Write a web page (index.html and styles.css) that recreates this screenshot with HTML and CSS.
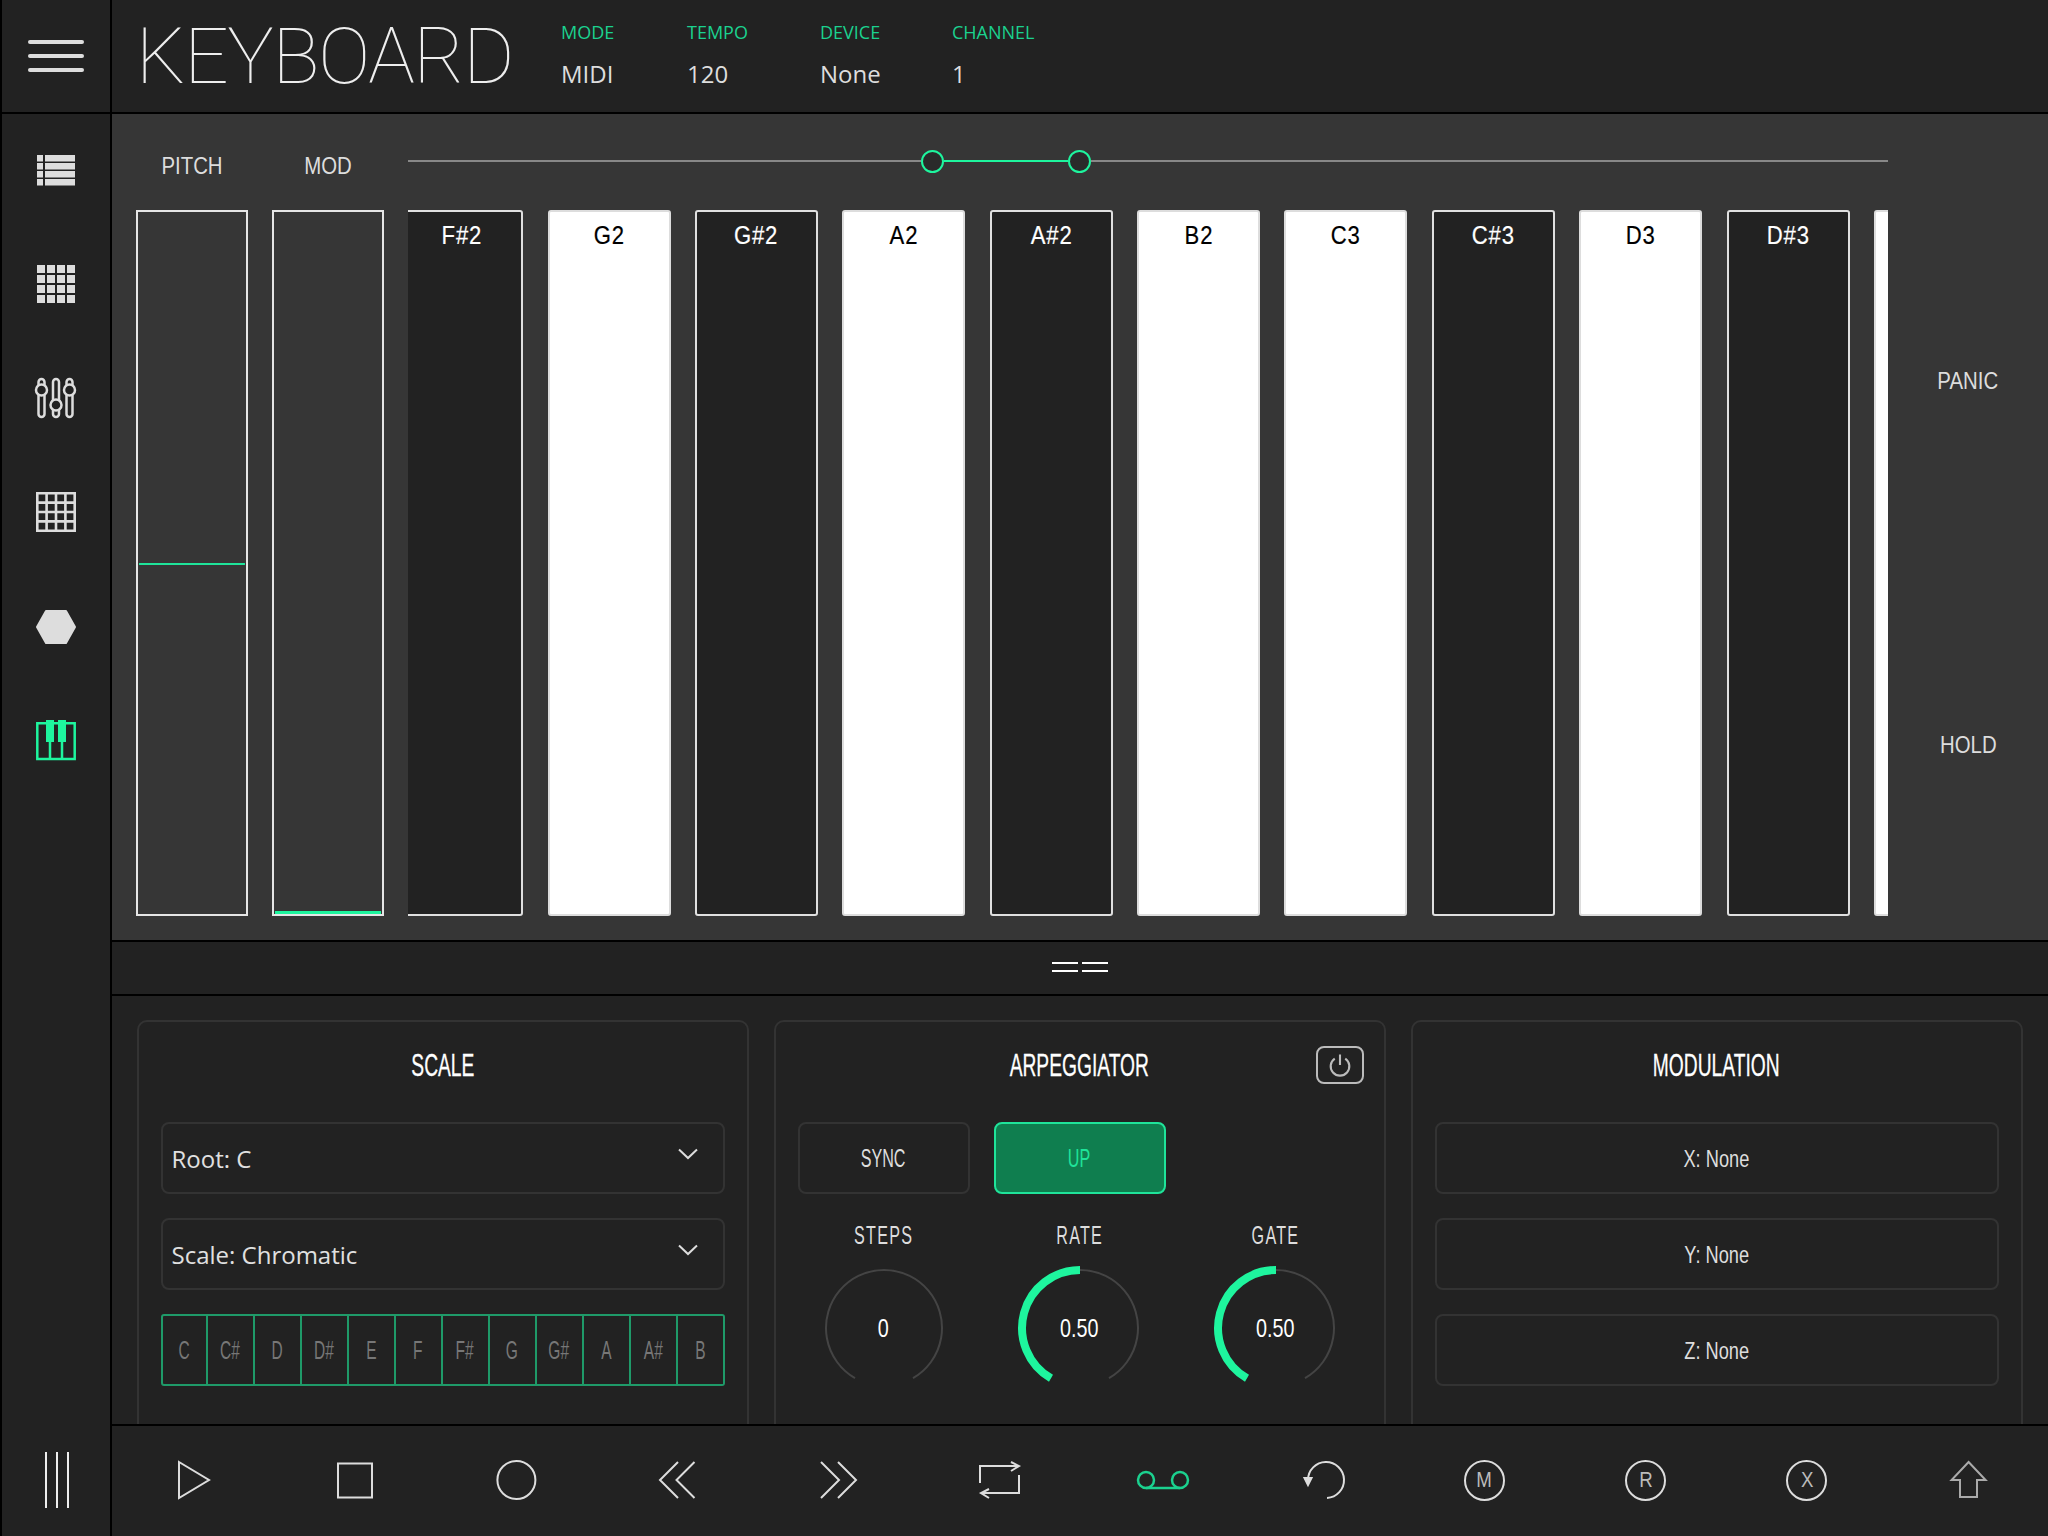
FILE: index.html
```html
<!DOCTYPE html>
<html lang="en">

<head>
  <meta charset="UTF-8">
  <title>Keyboard</title>
  <link rel="stylesheet" href="styles.css">
</head>

<body>
  <div id="app">
    <!-- left column -->
    <div class="sidebar">
      <div class="brand">
        <div class="burger"><span></span><span></span><span></span></div>
      </div>
      <div class="nav">
        <div class="nav-item">
          <svg width="48" height="48" viewBox="0 0 48 48" fill="#ddd">
            <path d="M5 9h6v6.5h-6zM13 9h30v6.5h-30zM5 17h6v6.5h-6zM13 17h30v6.5h-30zM5 25h6v6.5h-6zM13 25h30v6.5h-30zM5 33h6v6.5h-6zM13 33h30v6.5h-30z"/>
          </svg>
        </div>
        <div class="nav-item">
          <svg width="48" height="48" viewBox="0 0 48 48" fill="#ddd">
            <path d="M5 5h8v8h-8zM15 5h8v8h-8zM25 5h8v8h-8zM35 5h8v8h-8zM5 15h8v8h-8zM15 15h8v8h-8zM25 15h8v8h-8zM35 15h8v8h-8zM5 25h8v8h-8zM15 25h8v8h-8zM25 25h8v8h-8zM35 25h8v8h-8zM5 35h8v8h-8zM15 35h8v8h-8zM25 35h8v8h-8zM35 35h8v8h-8z"/>
          </svg>
        </div>
        <div class="nav-item">
          <svg width="48" height="48" viewBox="0 0 48 48" fill="#222" stroke="#ddd" stroke-width="2.5">
            <rect x="6.5" y="5" width="6" height="38" rx="3"/>
            <rect x="21" y="5" width="6" height="38" rx="3"/>
            <rect x="34.5" y="5" width="6" height="38" rx="3"/>
            <circle cx="9.5" cy="16" r="5.5"/>
            <circle cx="24" cy="31" r="5.5"/>
            <circle cx="37.5" cy="16" r="5.5"/>
          </svg>
        </div>
        <div class="nav-item">
          <svg width="48" height="48" viewBox="0 0 48 48" fill="none" stroke="#ddd" stroke-width="2.6">
            <path d="M5.3 5.3H42.7V42.7H5.3ZM14.6 5.3V42.7M24 5.3V42.7M33.4 5.3V42.7M5.3 14.6H42.7M5.3 24H42.7M5.3 33.4H42.7"/>
          </svg>
        </div>
        <div class="nav-item">
          <svg width="48" height="48" viewBox="0 0 48 48" fill="#ddd" stroke="#ddd" stroke-width="2" stroke-linejoin="round">
            <polygon points="5,25 14,9 34,9 43,25 34,41 14,41"/>
          </svg>
        </div>
        <div class="nav-item">
          <svg width="48" height="48" viewBox="0 0 48 48" fill="none" stroke="#1ef59e" stroke-width="2.5">
            <path d="M5.3 7.3H42.7V43H5.3ZM18 7.3V43M30 7.3V43"/>
            <path d="M14 4h8v22h-8zM26 4h8v22h-8z" fill="#1ef59e" stroke="none"/>
          </svg>
        </div>
        <div class="nav-foot">
          <svg width="26" height="58" viewBox="0 0 26 58" stroke="#eee" stroke-width="2">
            <path d="M2 1V57M13 1V57M24 1V57"/>
          </svg>
        </div>
      </div>
    </div>

    <div class="main">
      <div class="header">
        <h1 class="title">KEYBOARD</h1>
        <div class="info w-mode"><span class="info-label">MODE</span><span class="info-value">MIDI</span></div>
        <div class="info w-tempo"><span class="info-label">TEMPO</span><span class="info-value">120</span></div>
        <div class="info w-device"><span class="info-label">DEVICE</span><span class="info-value">None</span></div>
        <div class="info"><span class="info-label">CHANNEL</span><span class="info-value">1</span></div>
      </div>

      <div class="play-area">
        <div class="fader-col">
          <div class="fader-label"><span class="narrow">PITCH</span></div>
          <div class="fader"><div class="fader-pitch"></div></div>
        </div>
        <div class="fader-col">
          <div class="fader-label"><span class="narrow">MOD</span></div>
          <div class="fader"><div class="fader-mod"></div></div>
        </div>
        <div class="keys-col">
          <div class="range">
            <div class="range-line"></div>
            <div class="range-handle"></div>
            <div class="range-line range-on"></div>
            <div class="range-handle"></div>
            <div class="range-line range-end"></div>
          </div>
          <div class="keys">
            <div class="key black"><span class="narrow">F#2</span></div>
            <div class="key white"><span class="narrow">G2</span></div>
            <div class="key black"><span class="narrow">G#2</span></div>
            <div class="key white"><span class="narrow">A2</span></div>
            <div class="key black"><span class="narrow">A#2</span></div>
            <div class="key white"><span class="narrow">B2</span></div>
            <div class="key white"><span class="narrow">C3</span></div>
            <div class="key black"><span class="narrow">C#3</span></div>
            <div class="key white"><span class="narrow">D3</span></div>
            <div class="key black"><span class="narrow">D#3</span></div>
            <div class="key white"></div>
          </div>
        </div>
        <div class="side-btns">
          <div class="side-btn"><span class="narrow">PANIC</span></div>
          <div class="side-btn"><span class="narrow">HOLD</span></div>
        </div>
      </div>

      <div class="divider">
        <div class="grip"><span></span><span></span></div>
        <div class="grip"><span></span><span></span></div>
      </div>

      <div class="panels">
        <div class="panel">
          <div class="panel-head"><h2 class="panel-title"><span class="cond">SCALE</span></h2></div>
          <div class="stack">
            <div class="select">
              <span>Root: C</span>
              <svg width="20" height="12" viewBox="0 0 20 12" fill="none" stroke="#ddd" stroke-width="2"><path d="M1 1.5L10 10L19 1.5"/></svg>
            </div>
            <div class="select">
              <span>Scale: Chromatic</span>
              <svg width="20" height="12" viewBox="0 0 20 12" fill="none" stroke="#ddd" stroke-width="2"><path d="M1 1.5L10 10L19 1.5"/></svg>
            </div>
            <div class="notes">
              <div class="note"><span class="cond">C</span></div>
              <div class="note"><span class="cond">C#</span></div>
              <div class="note"><span class="cond">D</span></div>
              <div class="note"><span class="cond">D#</span></div>
              <div class="note"><span class="cond">E</span></div>
              <div class="note"><span class="cond">F</span></div>
              <div class="note"><span class="cond">F#</span></div>
              <div class="note"><span class="cond">G</span></div>
              <div class="note"><span class="cond">G#</span></div>
              <div class="note"><span class="cond">A</span></div>
              <div class="note"><span class="cond">A#</span></div>
              <div class="note"><span class="cond">B</span></div>
            </div>
          </div>
        </div>

        <div class="panel">
          <div class="panel-head">
            <h2 class="panel-title"><span class="cond">ARPEGGIATOR</span></h2>
            <div class="power">
              <svg width="28" height="28" viewBox="0 0 24 24" fill="none" stroke="#bbb" stroke-width="1.8">
                <path d="M7.5 6.5A8 8 0 1 0 16.5 6.5M12 3V12"/>
              </svg>
            </div>
          </div>
          <div class="arp-grid">
            <div class="btn"><span class="cond">SYNC</span></div>
            <div class="btn btn-on"><span class="cond">UP</span></div>
          </div>
          <div class="arp-grid knobs">
            <div class="knob-col">
              <div class="knob-label"><span class="cond">STEPS</span></div>
              <div class="knob">
                <svg width="130" height="130" viewBox="0 0 130 130" fill="none">
                  <path d="M36 115.2A58 58 0 1 1 94 115.2" stroke="#444" stroke-width="2"/>
                </svg>
                <div class="knob-value"><span class="cond-soft">0</span></div>
              </div>
            </div>
            <div class="knob-col">
              <div class="knob-label"><span class="cond">RATE</span></div>
              <div class="knob">
                <svg width="130" height="130" viewBox="0 0 130 130" fill="none">
                  <path d="M36 115.2A58 58 0 1 1 94 115.2" stroke="#444" stroke-width="2"/>
                  <path d="M36 115.2A58 58 0 0 1 65 7" stroke="#1ef59e" stroke-width="8"/>
                </svg>
                <div class="knob-value"><span class="cond-soft">0.50</span></div>
              </div>
            </div>
            <div class="knob-col">
              <div class="knob-label"><span class="cond">GATE</span></div>
              <div class="knob">
                <svg width="130" height="130" viewBox="0 0 130 130" fill="none">
                  <path d="M36 115.2A58 58 0 1 1 94 115.2" stroke="#444" stroke-width="2"/>
                  <path d="M36 115.2A58 58 0 0 1 65 7" stroke="#1ef59e" stroke-width="8"/>
                </svg>
                <div class="knob-value"><span class="cond-soft">0.50</span></div>
              </div>
            </div>
          </div>
        </div>

        <div class="panel">
          <div class="panel-head"><h2 class="panel-title"><span class="cond">MODULATION</span></h2></div>
          <div class="stack">
            <div class="btn"><span class="cond-soft">X: None</span></div>
            <div class="btn"><span class="cond-soft">Y: None</span></div>
            <div class="btn"><span class="cond-soft">Z: None</span></div>
          </div>
        </div>
      </div>

      <div class="transport">
        <div class="tool">
          <svg class="ico" width="48" height="48" viewBox="0 0 48 48"><path d="M10 5L40 23L10 41Z"/></svg>
        </div>
        <div class="tool">
          <svg class="ico" width="48" height="48" viewBox="0 0 48 48"><rect x="8" y="6.5" width="34" height="34"/></svg>
        </div>
        <div class="tool">
          <svg class="ico" width="48" height="48" viewBox="0 0 48 48"><circle cx="25.4" cy="23" r="19"/></svg>
        </div>
        <div class="tool">
          <svg class="ico" width="48" height="48" viewBox="0 0 48 48"><path d="M25 5L7 23L25 41M41.5 5L23.5 23L41.5 41"/></svg>
        </div>
        <div class="tool">
          <svg class="ico" width="48" height="48" viewBox="0 0 48 48"><path d="M7 5L25 23L7 41M24 5L42 23L24 41"/></svg>
        </div>
        <div class="tool">
          <svg class="ico" width="48" height="48" viewBox="0 0 48 48"><path d="M5 26V9H44M36 5L44 9L36 14M44 18V36H6M14 32L6 36L14 41"/></svg>
        </div>
        <div class="tool">
          <svg class="ico ico-on" width="48" height="48" viewBox="0 0 48 48"><circle cx="9" cy="23" r="8"/><circle cx="43" cy="23" r="8"/><path d="M9 31H43"/></svg>
        </div>
        <div class="tool">
          <svg class="ico" width="48" height="48" viewBox="0 0 48 48">
            <path d="M29 41A18 18 0 1 0 10 23"/>
            <polygon points="6.5,21 13.5,21 10,28" fill="#ddd"/>
          </svg>
        </div>
        <div class="tool"><div class="round"><span class="narrow">M</span></div></div>
        <div class="tool"><div class="round"><span class="narrow">R</span></div></div>
        <div class="tool"><div class="round"><span class="narrow">X</span></div></div>
        <div class="tool">
          <svg class="ico ico-dim" width="48" height="48" viewBox="0 0 48 48"><path d="M25.6 5L42.6 23H34V40H17V23H8.6Z"/></svg>
        </div>
      </div>
    </div>
  </div>
</body>

</html>
```

FILE: styles.css
```css
* {
  box-sizing: border-box;
}

html,
body {
  margin: 0;
  height: 100%;
  background-color: #000;
}

body {
  font-family: "Liberation Sans", sans-serif;
  color: #ddd;
  overflow: hidden;
}

#app {
  display: flex;
  width: 2048px;
  height: 1536px;
  background-color: #000;
}

/* no condensed font here, so the labels get squeezed */
.narrow {
  display: inline-block;
  transform: scaleX(.85);
}

.cond {
  display: inline-block;
  transform: scaleX(.62);
}

.cond-soft {
  display: inline-block;
  transform: scaleX(.76);
}

/* sidebar */
.sidebar {
  flex: none;
  display: flex;
  flex-direction: column;
  gap: 2px;
  width: 108px;
  margin: 0 2px;
}

.brand {
  flex: none;
  display: flex;
  align-items: center;
  justify-content: center;
  height: 112px;
  background-color: #222;
}

.burger {
  display: flex;
  flex-direction: column;
  gap: 10px;
}

.burger span {
  display: block;
  width: 56px;
  height: 4px;
  border-radius: 2px;
  background-color: #ddd;
}

.nav {
  flex: 1;
  display: flex;
  flex-direction: column;
  background-color: #222;
}

.nav-item {
  flex: none;
  display: flex;
  align-items: center;
  justify-content: center;
  height: 114px;
  padding-bottom: 2px;
}

.nav-foot {
  display: flex;
  align-items: center;
  justify-content: center;
  height: 110px;
  margin-top: auto;
  padding: 0 0 2px 2px;
}

/* right column */
.main {
  flex: 1;
  display: flex;
  flex-direction: column;
  gap: 2px;
  min-width: 0;
}

.header {
  flex: none;
  display: flex;
  height: 112px;
  background-color: #222;
}

.title {
  width: 449px;
  margin: 0;
  padding-left: 24px;
  font-family: "Roboto", sans-serif;
  font-size: 78px;
  font-weight: 100;
  line-height: 114px;
  letter-spacing: -1.3px;
  white-space: nowrap;
  color: #eee;
}

.info {
  display: flex;
  flex-direction: column;
  padding-top: 20px;
  font-family: "Open Sans", sans-serif;
}

.w-mode {
  width: 126px;
}

.w-tempo {
  width: 133px;
}

.w-device {
  width: 132px;
}

.info-label {
  font-size: 18px;
  line-height: 24px;
  color: #1bd18f;
}

.info-value {
  margin-top: 15px;
  font-size: 24px;
  line-height: 30px;
  color: #ddd;
}

/* faders, keys */
.play-area {
  flex: none;
  display: flex;
  height: 826px;
  padding-left: 24px;
  background-color: #363636;
}

.fader-col {
  flex: none;
  width: 112px;
  margin-right: 24px;
}

.fader-col + .fader-col {
  width: 111.5px;
  margin-right: 24.5px;
}

.fader-label {
  height: 96px;
  padding-top: 7px;
  font-size: 24px;
  line-height: 90px;
  text-align: center;
  color: #ddd;
}

.fader {
  position: relative;
  height: 706px;
  border: 2px solid #e6e6e6;
}

.fader-pitch {
  position: absolute;
  top: 50%;
  left: 1px;
  right: 1px;
  height: 2px;
  background-color: #1fe49a;
}

.fader-mod {
  position: absolute;
  bottom: 0;
  left: 1px;
  right: 1px;
  height: 3px;
  background-color: #1ef59e;
}

.keys-col {
  flex: none;
  width: 1480px;
}

.range {
  display: flex;
  align-items: center;
  height: 94px;
  margin-bottom: 2px;
}

.range-line {
  flex: none;
  width: 513px;
  height: 2px;
  background-color: #888;
}

.range-on {
  width: 124px;
  background-color: #1ef59e;
}

.range-end {
  flex: 1;
}

.range-handle {
  flex: none;
  width: 23px;
  height: 23px;
  border: 2px solid #1ef59e;
  border-radius: 50%;
  background-color: #2a2a2a;
}

.keys {
  display: flex;
  gap: 24.4px;
  height: 706px;
  overflow: hidden;
}

.key {
  flex: none;
  width: 123px;
  height: 706px;
  padding-top: 8px;
  border: 2px solid #e0e0e0;
  border-radius: 3px;
  font-size: 26px;
  line-height: 30px;
  letter-spacing: 1px;
  text-align: center;
  -webkit-text-stroke: .2px;
}

.key:first-child {
  margin-left: -7.9px;
}

.key.black {
  background-color: #222;
  color: #fff;
}

.key.white {
  border-color: #ddd;
  background-color: #fff;
  color: #000;
}

.side-btns {
  flex: 1;
  padding-top: 85px;
}

.side-btn {
  display: flex;
  align-items: center;
  justify-content: center;
  height: 364px;
  font-size: 24px;
  color: #ddd;
}

/* grip */
.divider {
  flex: none;
  display: flex;
  justify-content: center;
  align-items: center;
  gap: 4px;
  height: 52px;
  padding-bottom: 2px;
  background-color: #222;
}

.grip {
  display: flex;
  flex-direction: column;
  gap: 6px;
}

.grip span {
  display: block;
  width: 26px;
  height: 2px;
  background-color: #fff;
}

/* bottom panels */
.panels {
  flex: none;
  display: grid;
  grid-template-columns: repeat(3, 1fr);
  gap: 25px;
  height: 428px;
  padding: 24px 25.5px 0 24.5px;
  overflow: hidden;
  background-color: #222;
}

.panel {
  height: 430px;
  padding: 0 22px;
  border: 2px solid #333;
  border-radius: 10px;
}

.panel-head {
  display: grid;
  grid-template-columns: 1fr auto 1fr;
  align-items: center;
  height: 88px;
  margin-bottom: 12px;
}

.panel-title {
  grid-column: 2;
  margin: 0;
  font-size: 31px;
  font-weight: normal;
  line-height: 88px;
  white-space: nowrap;
  color: #fff;
  -webkit-text-stroke: .3px;
}

.power {
  grid-column: 3;
  justify-self: end;
  display: flex;
  align-items: center;
  justify-content: center;
  width: 48px;
  height: 38px;
  margin: 0 -2px 3px 0;
  border: 2px solid #bbb;
  border-radius: 8px;
}

.stack {
  display: flex;
  flex-direction: column;
  gap: 24px;
}

.stack .btn {
  font-size: 24px;
}

.select {
  display: flex;
  align-items: center;
  justify-content: space-between;
  height: 72px;
  padding: 0 25px 0 9px;
  border: 2px solid #333;
  border-radius: 8px;
  font-family: "Open Sans", sans-serif;
  font-size: 24px;
  color: #e0e0e0;
}

.select svg {
  margin-bottom: 8px;
}

.notes {
  display: grid;
  grid-template-columns: repeat(12, 1fr);
  height: 72px;
}

.note {
  display: flex;
  align-items: center;
  justify-content: center;
  border: 2px solid #1f9a69;
  border-left: 0;
  font-size: 25px;
  color: #777;
}

.note:first-child {
  border-left: 2px solid #1f9a69;
  border-radius: 3px 0 0 3px;
}

.note:last-child {
  border-radius: 0 3px 3px 0;
}

.btn {
  display: flex;
  align-items: center;
  justify-content: center;
  height: 72px;
  padding-top: 1px;
  border: 2px solid #333;
  border-radius: 8px;
  font-size: 26px;
  color: #ddd;
}

.btn-on {
  border-color: #1fe49a;
  background-color: #0f7e4f;
  color: #1fe49a;
}

.arp-grid {
  display: grid;
  grid-template-columns: repeat(3, 1fr);
  gap: 24px;
}

.knobs {
  padding-top: 29px;
}

.knob-col {
  display: flex;
  flex-direction: column;
  align-items: center;
}

.knob-label {
  font-size: 26px;
  line-height: 24px;
  letter-spacing: 2px;
  color: #ddd;
}

.knob {
  position: relative;
  width: 130px;
  height: 130px;
  margin-top: 16px;
}

.knob svg {
  display: block;
}

.knob-value {
  position: absolute;
  top: 0;
  left: 0;
  width: 100%;
  height: 100%;
  display: flex;
  align-items: center;
  justify-content: center;
  font-size: 26px;
  color: #fff;
}

/* transport */
.transport {
  flex: none;
  display: flex;
  height: 110px;
  background-color: #222;
}

.tool {
  flex: 1;
  display: flex;
  align-items: center;
  justify-content: center;
}

.ico {
  display: block;
  overflow: visible;
  fill: none;
  stroke: #ddd;
  stroke-width: 2;
}

.ico-on {
  stroke: #1bd18f;
  stroke-width: 2.5;
}

.ico-dim {
  stroke: #aaa;
}

.round {
  display: flex;
  align-items: center;
  justify-content: center;
  width: 41px;
  height: 41px;
  margin: 0 0 2px 2px;
  border: 2.5px solid #ddd;
  border-radius: 50%;
  font-size: 22px;
  color: #bbb;
}
```
